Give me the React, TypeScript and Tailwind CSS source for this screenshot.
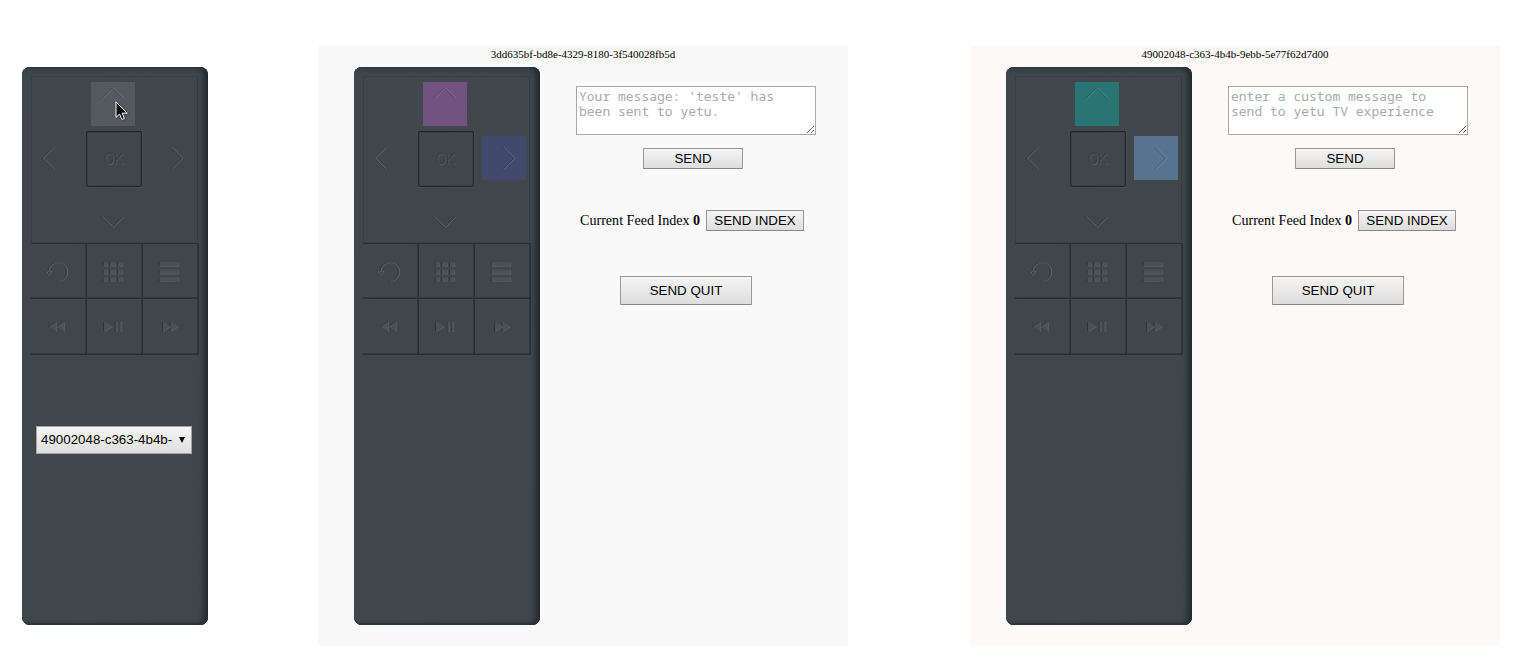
import type { ReactNode } from "react";

function Glyph({ d, filled = false }: { d: string; filled?: boolean }) {
  if (filled) {
    return (
      <svg viewBox="0 0 56 56" className="block size-14 overflow-visible">
        <path d={d} transform="translate(-0.9 0)" fill="#2c3438" />
        <path d={d} transform="translate(0.7 0.6)" fill="#596064" />
        <path d={d} fill="#4a5155" />
      </svg>
    );
  }
  return (
    <svg viewBox="0 0 56 56" className="block size-14 overflow-visible" strokeWidth="1" fill="none">
      <path d={d} transform="translate(0.7 0)" stroke="#ffffff" strokeOpacity="0.15" />
      <path d={d} transform="translate(-0.6 0)" stroke="#000000" strokeOpacity="0.18" />
    </svg>
  );
}

const DOTS =
  "M18.5 19h3.5v4.5h-3.5zM25 19h5v4.5h-5zM33 19h4.5v4.5H33zM18.5 26.3h3.5v4.5h-3.5zM25 26.3h5v4.5h-5zM33 26.3h4.5v4.5H33zM18.5 33.7h3.5v4.5h-3.5zM25 33.7h5v4.5h-5zM33 33.7h4.5v4.5H33z";

const KEYS = [
  { name: "back", d: "M19.3 28.5A9.4 9.4 0 1 1 28.8 38.5M16.3 28.5h6l-3 4z", filled: false },
  { name: "apps", d: DOTS, filled: true },
  { name: "menu", d: "M18.5 19h19v4.5h-19zM18.5 26.3h19v4.5h-19zM18.5 33.7h19v4.5h-19z", filled: true },
  { name: "rewind", d: "M19.8 27.5l7.5-5v10zM27.3 27.5l8-5v10z", filled: true },
  { name: "play", d: "M19 22.5v10l8.3-5zM30.5 22.5h2v10h-2zM34.5 22.5h2v10h-2z", filled: true },
  { name: "forward", d: "M22 22.5v10l7.4-5zM29.4 22.5v10l8-5z", filled: true },
];

function Key({ children }: { children: ReactNode }) {
  return (
    <div className="flex h-14 justify-end border-r border-b border-[#293034] pr-px shadow-[inset_-1px_-1px_0_#32393d,inset_0_1px_0_#454c50]">
      <div className="size-14 shrink-0">{children}</div>
    </div>
  );
}

function Remote({ up, right, children }: { up?: string; right?: string; children?: ReactNode }) {
  return (
    <div className="h-[558px] w-[186px] shrink-0 rounded-[8px] bg-[linear-gradient(120deg,#41484c_0%,#41474b_9%,#42474e_20%,#40474b_31%,#40474a_42%,#40474b_53%,#40474b_64%,#40474d_75%,#3f474a_87%,#3f464b_100%)] pt-[9px] pl-[9px] shadow-[inset_-3px_0_4px_#20282d,inset_-7px_0_4px_#353f44,inset_4px_0_5px_#3e4b51,inset_0_-2px_1px_#2b343a,inset_0_5px_5px_#39444a]">
      <div className="relative z-10 grid h-[167px] w-[167px] grid-cols-[55px_56px_56px] grid-rows-[55px_56px_56px] shadow-[inset_1px_1px_0_#394044,inset_0_-1px_0_#394145,inset_-1px_0_0_#343c40,0_1px_0_#293034]">
        <div className="col-start-2 row-start-1 flex size-14 items-start pt-[6px] pl-[5px]">
          <div className={`flex size-11 items-start ${up ?? ""}`}>
            <div className="-mt-[7px] -ml-[5px] size-14 shrink-0"><Glyph d="M16.2 23.5L26.9 12.8L37.6 23.5" /></div>
          </div>
        </div>
        <div className="col-start-1 row-start-2 -ml-px size-14"><Glyph d="M23.5 16.5L12.7 27.3L23.5 38" /></div>
        <div className="col-start-2 row-start-2 flex size-14 items-center justify-center rounded-[2px] border border-[#22292c] pr-px font-[Roboto,sans-serif] text-[15px] font-light text-[#363d41] shadow-[inset_1px_1px_0_#394044,inset_-1px_-1px_0_#394044,1px_1px_0_#464d50] [text-shadow:1px_1px_0_#555c60]">
          OK
        </div>
        <div className="col-start-3 row-start-2 flex size-14 items-start pt-[5px] pl-2">
          <div className={`flex size-11 items-start ${right ?? ""}`}>
            <div className="-mt-[5px] -ml-[9px] size-14 shrink-0"><Glyph d="M30.5 16.5L41.3 27.3L30.5 38" /></div>
          </div>
        </div>
        <div className="col-start-2 row-start-3 -ml-px size-14"><Glyph d="M17 29.8L27.7 40.5L38.4 29.8" /></div>
      </div>
      <div className="grid h-28 w-[168px] grid-cols-3">
        {KEYS.map((k) => (
          <Key key={k.name}><Glyph d={k.d} filled={k.filled} /></Key>
        ))}
      </div>
      {children}
    </div>
  );
}

const BTN =
  "flex items-center justify-center border border-[#979797] border-b-[#888] rounded-[1px] bg-linear-to-b from-[#f5f5f5] to-[#dddddd] font-['Liberation_Sans',Arial,sans-serif] text-[13.33px] leading-none whitespace-nowrap text-black";

function Screen({ id, bg, message, up, right }: { id: string; bg: string; message: string; up: string; right: string }) {
  return (
    <section className={`h-[600px] w-[530px] shrink-0 ${bg}`}>
      <h2 className="h-[21px] pt-px text-center text-[11px] leading-[14px]">{id}</h2>
      <div className="flex pl-9">
        <Remote up={up} right={right} />
        <div className="ml-9 flex flex-col items-start pt-[19px]">
          <textarea
            placeholder={message}
            className="block h-[49px] w-[240px] resize overflow-hidden border border-[#a9a9a9] bg-white py-[2px] pr-[17px] pl-[2px] font-['Droid_Sans_Mono','Noto_Sans_Mono','DejaVu_Sans_Mono',monospace] text-[13px] leading-[15px] placeholder:text-[#a9a9a9]"
          />
          <button className={`${BTN} mt-[13px] ml-[67px] h-[21px] w-[100px]`}>SEND</button>
          <div className="mt-[41px] ml-1 flex h-[21px] items-center text-[14.1px]">
            <span className="w-[126px] whitespace-nowrap">Current Feed Index <b>0</b></span>
            <button className={`${BTN} h-[21px] w-[98px]`}>SEND INDEX</button>
          </div>
          <button className={`${BTN} mt-[45px] ml-11 h-[29px] w-[132px]`}>SEND QUIT</button>
        </div>
      </div>
    </section>
  );
}

export default function App() {
  return (
    <main className="flex h-[668px] w-[1530px] overflow-hidden bg-white pt-[46px] pl-[22px] font-['Liberation_Serif','Times_New_Roman',serif] text-black">
      <div className="relative mr-[110px] pt-[21px]">
        <Remote up="bg-white/10">
          <div className="mt-[71px] ml-[5px] flex h-7 w-[156px] items-center justify-between border border-[#a5a5a5] bg-linear-to-b from-[#f6f6f6] to-[#dedede] pr-[6px] pl-1 font-['Liberation_Sans',Arial,sans-serif] text-[13.33px]">
            <span>49002048-c363-4b4b-</span>
            <svg viewBox="0 0 6 6" className="h-[6px] w-[6px]"><path d="M0 0h6L3 6z" /></svg>
          </div>
        </Remote>
        <svg viewBox="0 0 13 20" className="absolute top-[55px] left-[93px] z-20 h-5 w-[13px] drop-shadow-[1px_1px_1px_#0005]">
          <path d="M1 .8v15.6l3.6-3.3 2.3 5.4 2.5-1.1-2.2-5.2h4.9z" fill="#0b0b0b" stroke="white" strokeWidth="1" />
        </svg>
      </div>
      <Screen
        id="3dd635bf-bd8e-4329-8180-3f540028fb5d"
        bg="bg-[#f9f9f9]"
        message="Your message: 'teste' has been sent to yetu."
        up="bg-[#73527f]"
        right="bg-[#42496f]"
      />
      <div className="w-[122px] shrink-0" />
      <Screen
        id="49002048-c363-4b4b-9ebb-5e77f62d7d00"
        bg="bg-[#fdf9f8]"
        message="enter a custom message to send to yetu TV experience"
        up="bg-[#2a7473]"
        right="bg-[#58728f]"
      />
    </main>
  );
}
